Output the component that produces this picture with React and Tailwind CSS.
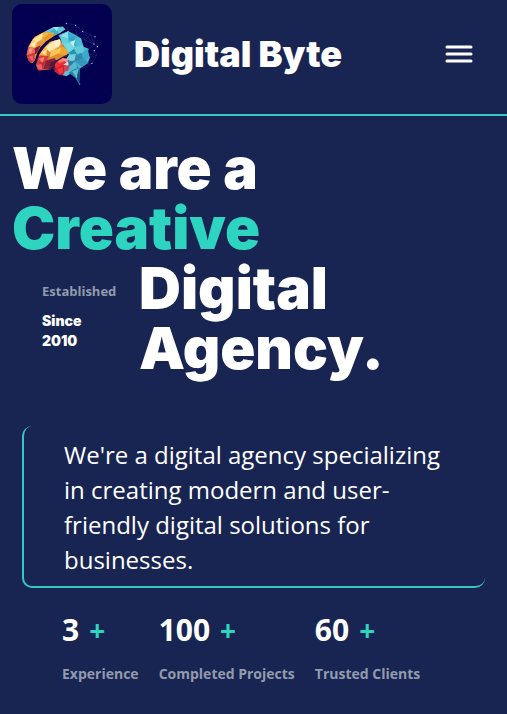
const lobes = [
  ['#e99a45', '80,164 86,138 104,110 128,98 160,82 188,80 196,88 178,100 162,108 138,124 122,140 112,158 104,182 96,190 86,182'],
  ['#d98238', '108,196 118,160 130,144 148,126 180,118 192,138 206,150 202,168 180,174 170,188 152,208 130,210 114,210'],
  ['#48bdd2', '176,106 204,94 228,106 244,116 250,140 266,146 262,158 270,172 264,188 248,200 236,208 200,228 188,224 198,186 206,164 190,134'],
  ['#cf2737', '162,200 168,184 188,174 206,180 204,212 194,226 176,224 164,214'],
];

const facets = [
  // upper-left lobe
  ['#5ec8dc', '128,98 160,82 188,80 196,88 178,100 150,96'],
  ['#39b2cd', '150,96 166,84 178,100 160,106'],
  ['#a6e3e6', '160,82 176,80 170,94'],
  ['#f4b942', '104,112 128,98 162,98 150,114 122,122'],
  ['#ffe3a0', '98,118 128,100 126,116 108,130'],
  ['#e69a24', '126,116 150,98 164,106 138,124'],
  ['#f7ca6a', '86,140 98,118 112,126 106,146'],
  ['#fff0c4', '92,134 108,122 104,142'],
  ['#e59a3a', '106,146 114,126 138,124 122,140'],
  ['#ef6a56', '80,164 86,140 106,144 98,168'],
  ['#f59a86', '86,148 98,144 92,164'],
  ['#d0353a', '80,166 104,158 104,182 92,190 84,178'],
  ['#8e1f35', '104,144 122,136 112,158 104,164'],
  ['#f4606a', '84,172 98,166 100,184'],
  // central lobe
  ['#f6c25a', '130,144 148,126 178,118 178,142 152,156'],
  ['#ffe8ae', '138,140 160,124 166,146 148,156'],
  ['#fff1cb', '160,124 180,118 182,136 166,144'],
  ['#f0a52c', '178,136 204,150 202,166 176,166'],
  ['#fac655', '152,152 184,144 176,168 150,172'],
  ['#e0902c', '150,172 176,160 194,168 170,184'],
  ['#f8b84e', '120,154 138,144 142,170 116,170'],
  ['#ffe09b', '124,156 142,148 136,166'],
  ['#d93d39', '110,178 120,166 146,168 138,190 112,196'],
  ['#fa806d', '116,176 134,170 128,188'],
  ['#c72b38', '108,194 136,184 130,210 116,212'],
  ['#f15d67', '110,194 124,192 128,210 114,208'],
  ['#882036', '136,182 164,174 172,188 152,208 130,208'],
  ['#5e1738', '152,186 178,178 168,208 146,208'],
  // blue lobe
  ['#46bfd5', '176,106 204,94 226,106 220,132 190,130'],
  ['#92e0e6', '180,108 206,94 204,116'],
  ['#35b0ca', '204,96 228,108 220,124 206,116'],
  ['#61d0dd', '182,112 204,116 206,138 186,132'],
  ['#34a3c0', '206,116 224,108 246,124 228,144'],
  ['#77d8e0', '188,132 216,126 228,144 206,158'],
  ['#4bbdd0', '224,112 242,114 250,140 228,144'],
  ['#2a90b4', '206,158 228,142 236,162 218,174'],
  ['#60cbd9', '220,142 250,136 252,158 232,166'],
  ['#bff0ed', '210,126 226,120 220,140'],
  ['#39aac8', '246,158 264,146 268,174 250,184'],
  ['#2f88ae', '216,170 244,158 252,182 226,190'],
  ['#72d2dc', '206,164 228,162 222,186 200,176'],
  ['#3596b8', '224,184 252,174 266,188 244,200'],
  ['#327ba0', '200,184 224,182 236,204 206,206'],
  ['#54b9ce', '206,202 226,184 232,202 212,214'],
  // lower red lobe
  ['#ed302f', '164,190 180,178 196,182 190,204 166,206'],
  ['#ff766a', '172,182 188,174 194,184 178,190'],
  ['#cd1c31', '166,206 190,194 196,216 184,224 170,218'],
  ['#ed3a40', '172,208 188,200 190,218 178,222'],
  ['#f09e9b', '184,174 206,176 200,188'],
  ['#e3d9df', '190,194 204,184 206,198'],
  ['#d2405b', '192,198 208,196 204,214 192,224'],
  ['#65bfd0', '196,214 214,210 200,228 188,226'],
  // stem
  ['#267fa4', '206,218 222,208 240,204 238,254 226,234'],
  ['#65b9cd', '216,214 236,206 230,234'],
  ['#154f83', '230,230 238,208 238,252'],
];

const mesh = 'M190 80L199 70L227 75L248 94L272 104L285 111L282 133L292 140L283 152L290 166L276 190L260 200L240 206M199 70L205 94L227 75L230 104L248 94L254 120L272 104L282 133L254 120L264 148L283 152L268 172L290 166M205 94L230 104L254 120M248 94L282 133M264 148L282 133M268 172L276 190L250 194M136 208L170 192L146 168L126 208M160 176L200 182L226 188L266 178';
const stars = [[199, 70], [227, 76], [248, 94], [285, 110], [282, 132], [292, 140], [283, 152], [276, 190], [239, 252], [230, 230]];

function BrainLogo() {
  return (
    <svg viewBox="36 12 300 300" className="size-[100px] shrink-0 rounded-[10px] bg-[#030052]" role="img" aria-label="Digital Byte logo">
      {lobes.map(([fill, points]) => (
        <polygon key={points} points={points} fill={fill} />
      ))}
      {facets.map(([fill, points]) => (
        <polygon key={points} points={points} fill={fill} />
      ))}
      <path d="M108 186L116 162L130 142L148 124L176 110" stroke="#240a48" strokeWidth="5" fill="none" />
      <path d="M156 206L166 186L184 174L206 164" stroke="#3c0f3c" strokeWidth="4" fill="none" />
      <path d={mesh} stroke="#8192cf" strokeOpacity="0.5" strokeWidth="1" fill="none" />
      {stars.map(([x, y]) => (
        <circle key={`${x}-${y}`} cx={x} cy={y} r="1.8" fill="#c9d5ee" />
      ))}
    </svg>
  );
}

const stats = [
  { value: '3', label: 'Experience' },
  { value: '100', label: 'Completed Projects' },
  { value: '60', label: 'Trusted Clients' },
];

export default function App() {
  return (
    <div className="min-h-screen bg-[#182552] font-['Open_Sans','Noto_Sans',sans-serif] text-white">
      <header className="flex items-center border-b-2 border-[#38c6bd] px-3 pt-1 pb-[10px]">
        <BrainLogo />
        <a href="#home" className="ml-[22px] font-['Inter',sans-serif] text-4xl font-black">Digital Byte</a>
        <button type="button" aria-label="Open menu" className="mr-[18px] ml-auto p-1">
          <svg viewBox="0 0 28 20" className="h-5 w-7" stroke="white" strokeWidth="3" strokeLinecap="round">
            <path d="M2 3H26M2 10H26M2 17H26" />
          </svg>
        </button>
      </header>
      <main>
        <section className="px-3 pt-[22px]">
          <h1 className="font-['Inter',sans-serif] text-[58px] leading-[60px] font-black">
            We are a
            <span className="block text-[#2dd4bf]">Creative</span>
            <span className="flex">
              <span className="w-[127px] shrink-0 pt-[23px] pl-[30px] text-sm leading-5">
                <span className="block font-['Open_Sans',sans-serif] text-[13px] font-bold text-[#929bad]">Established</span>
                <span className="mt-[10px] block w-12">Since 2010</span>
              </span>
              <span>Digital<br />Agency.</span>
            </span>
          </h1>
        </section>
        <p className="mx-[22px] mt-[48px] rounded-[10px] border-b-2 border-l-2 border-[#38c6bd] pt-[11px] pr-10 pb-[9px] pl-10 text-2xl leading-[35px]">
          We're a digital agency specializing in creating modern and user-friendly digital solutions for businesses.
        </p>
        <dl className="mt-6 flex gap-5 px-[62px]">
          {stats.map(({ value, label }) => (
            <div key={label} className="flex shrink-0 flex-col-reverse gap-4">
              <dt className="text-sm leading-5 font-bold whitespace-nowrap text-[#929bad]">{label}</dt>
              <dd className="flex gap-[10px] text-[30px] leading-9 font-bold">
                {value}
                <span className="text-[28px] text-[#2dd4bf]">+</span>
              </dd>
            </div>
          ))}
        </dl>
      </main>
    </div>
  );
}
